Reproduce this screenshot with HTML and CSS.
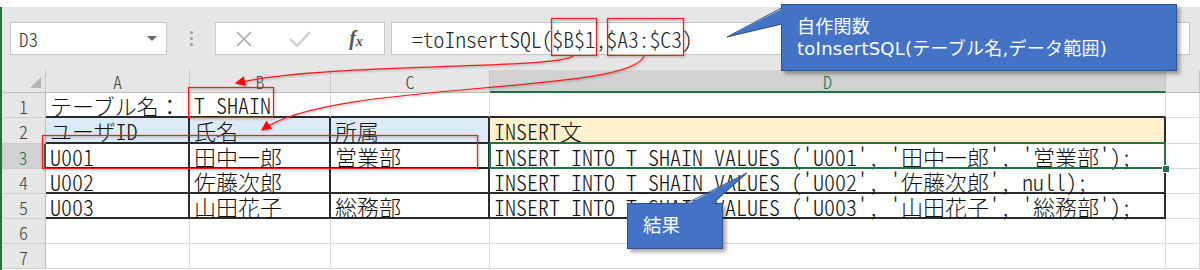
FILE: index.html
```html
<!DOCTYPE html>
<html lang="ja">
<head>
    <meta charset="UTF-8">
    <title>toInsertSQL</title>
    <link rel="stylesheet" href="styles.css">
</head>
<body>
    <div class="app">
        <div class="formula-bar">
            <div class="namebox"><span>D3</span><i class="caret"></i></div>
            <div class="grip"><i></i><i></i><i></i></div>
            <div class="fx-buttons">
                <span><svg width="18" height="16" viewBox="0 0 18 16"><path d="M2 1 L16 15 M16 1 L2 15" stroke="#a8a8a8" stroke-width="1.6" fill="none"/></svg></span>
                <span><svg width="22" height="16" viewBox="0 0 22 16"><path d="M1 8 L8 15 L21 1" stroke="#cfcfcf" stroke-width="2.4" fill="none"/></svg></span>
                <span class="fx">f<small>x</small></span>
            </div>
            <div class="formula">=toInsertSQL($B$1,$A3:$C3)</div>
        </div>

        <div class="sheet">
            <div class="hd corner"><i></i></div>
            <div class="hd">A</div>
            <div class="hd">B</div>
            <div class="hd">C</div>
            <div class="hd on">D</div>
            <div class="hd"></div>

            <div class="rh">1</div>
            <div class="c top"><span class="kana">テーブル名：</span></div>
            <div class="c top lift">T_SHAIN</div>
            <div class="c top"></div>
            <div class="c top"></div>
            <div class="c"></div>

            <div class="rh">2</div>
            <div class="c t head"><span class="kana">ユーザ</span>ID</div>
            <div class="c t head">氏名</div>
            <div class="c t head">所属</div>
            <div class="c t note">INSERT文</div>
            <div class="c"></div>

            <div class="rh on">3</div>
            <div class="c t">U001</div>
            <div class="c t">田中一郎</div>
            <div class="c t">営業部</div>
            <div class="c t active">INSERT INTO T_SHAIN VALUES ('U001', '田中一郎', '営業部');</div>
            <div class="c"></div>

            <div class="rh">4</div>
            <div class="c t">U002</div>
            <div class="c t">佐藤次郎</div>
            <div class="c t"></div>
            <div class="c t">INSERT INTO T_SHAIN VALUES ('U002', '佐藤次郎', null);</div>
            <div class="c"></div>

            <div class="rh">5</div>
            <div class="c t">U003</div>
            <div class="c t">山田花子</div>
            <div class="c t">総務部</div>
            <div class="c t">INSERT INTO T_SHAIN VALUES ('U003', '山田花子', '総務部');</div>
            <div class="c"></div>

            <div class="rh">6</div>
            <div class="c"></div><div class="c"></div><div class="c"></div><div class="c"></div><div class="c"></div>

            <div class="rh">7</div>
            <div class="c"></div><div class="c"></div><div class="c"></div><div class="c"></div><div class="c"></div>
        </div>
    </div>

    <!-- callouts -->
    <div class="callout callout-func">自作関数<br>toInsertSQL(テーブル名,データ範囲)</div>
    <div class="callout callout-result">結果</div>

    <!-- red marks, arrows and callout tails -->
    <svg class="marks" width="1200" height="270" viewBox="0 0 1200 270">
        <defs>
            <marker id="head" viewBox="0 0 10 10" refX="9" refY="5" markerWidth="11" markerHeight="10" markerUnits="userSpaceOnUse" orient="auto">
                <path d="M0 0 L10 5 L0 10 z" fill="#ff0000"/>
            </marker>
        </defs>
        <g class="red" fill="none" stroke="#ff1a1a" stroke-width="1.2">
            <rect x="551.5" y="18.5" width="45" height="37"/>
            <rect x="607.5" y="18.5" width="76" height="37"/>
            <rect x="188.5" y="87.5" width="85" height="30"/>
            <rect x="42.5" y="135.5" width="435" height="33"/>
            <path d="M573 56 C555 70 330 62 236 83" marker-end="url(#head)"/>
            <path d="M644 56 C630 95 330 80 262 130" marker-end="url(#head)"/>
        </g>
        <g class="tail">
            <polygon points="727,37 784,8 784,24" fill="#4472c4"/>
            <polyline points="781.5,8 727,37 781.5,24" fill="none" stroke="#2f528f" stroke-width="1"/>
            <polygon points="747,173 686,205 712,205" fill="#4472c4"/>
            <polyline points="686,203.5 747,173 712,203.5" fill="none" stroke="#2f528f" stroke-width="1"/>
        </g>
    </svg>
</body>
</html>
```

FILE: styles.css
```css
body {
    margin: 0;
    width: 1200px;
    height: 270px;
    overflow: hidden;
    position: relative;
    background: #fff;
    font-family: "Noto Sans CJK JP", sans-serif;
}
.app {
    margin-top: 7px;
    border-left: 2px solid #217346;
    height: 263px;
}

/* formula bar */
.formula-bar {
    height: 63px;
    background: #e6e6e6;
    display: flex;
    align-items: center;
    padding-left: 8px;
}
.namebox {
    width: 157px;
    height: 33px;
    box-sizing: border-box;
    background: #fff;
    border: 1px solid #c8c8c8;
    display: flex;
    align-items: center;
    justify-content: space-between;
    padding: 0 9px 0 8px;
    font-size: 19px;
    font-weight: 300;
    font-feature-settings: "hwid" 1;
    color: #333;
}
.caret {
    width: 0;
    height: 0;
    border-left: 5px solid transparent;
    border-right: 5px solid transparent;
    border-top: 5px solid #666;
}
.grip {
    width: 48px;
    display: flex;
    flex-direction: column;
    align-items: center;
    gap: 3px;
}
.grip i {
    width: 3px;
    height: 3px;
    border-radius: 50%;
    background: #9a9a9a;
}
.fx-buttons {
    width: 170px;
    height: 33px;
    box-sizing: border-box;
    background: #fff;
    border: 1px solid #c8c8c8;
    display: flex;
}
.fx-buttons span {
    flex: 1;
    display: flex;
    align-items: center;
    justify-content: center;
}
.fx {
    font-family: "Liberation Serif", serif;
    font-style: italic;
    font-weight: bold;
    font-size: 20px;
    color: #555;
}
.fx small {
    font-size: 14px;
    margin-top: 6px;
}
.formula {
    flex: 1;
    height: 33px;
    box-sizing: border-box;
    margin: 0 10px 0 6px;
    background: #fff;
    border: 1px solid #c8c8c8;
    padding-left: 20px;
    font-size: 21.6px;
    font-weight: 300;
    line-height: 31px;
    font-feature-settings: "hwid" 1;
    color: #222;
    white-space: nowrap;
}

/* sheet */
.sheet {
    display: grid;
    grid-template-columns: 44px 144px 141px 159px 676px 1fr;
    grid-template-rows: 23px 25px 26px 25px 25px 25px 25px 25px;
    font-feature-settings: "hwid" 1;
}
.sheet > div {
    box-sizing: border-box;
    white-space: nowrap;
}
.hd {
    background: #e6e6e6;
    border-right: 1px solid #c6c6c6;
    border-bottom: 1px solid #bdbdbd;
    text-align: center;
    font-size: 18px;
    font-weight: 300;
    line-height: 22px;
    color: #444;
}
.hd.on {
    background: #d2d2d2;
    color: #217346;
    border-bottom: 2px solid #217346;
}
.corner {
    position: relative;
}
.corner i {
    position: absolute;
    right: 4px;
    bottom: 4px;
    width: 0;
    height: 0;
    border-left: 11px solid transparent;
    border-bottom: 11px solid #b4b4b4;
}
.rh {
    background: #e6e6e6;
    border-right: 1px solid #bdbdbd;
    border-bottom: 1px solid #cfcfcf;
    text-align: center;
    font-size: 18px;
    font-weight: 300;
    line-height: 26px;
    color: #444;
}
.rh.on {
    background: #d2d2d2;
    color: #217346;
    border-right: 2px solid #217346;
}
.c {
    border-right: 1px solid #dadada;
    border-bottom: 1px solid #dadada;
    padding-left: 4px;
    font-size: 22px;
    font-weight: 300;
    line-height: 24px;
    color: #111;
}
.c.top {
    border-bottom: 2px solid #2b2b2b;
}
.c.lift {
    line-height: 22px;
}
.c.t {
    border-right: 2px solid #2b2b2b;
    border-bottom: 2px solid #2b2b2b;
}
.c.head {
    background: #ddebf7;
}
.c.note {
    background: #fff2cc;
}
.kana {
    font-feature-settings: normal;
}
.c.active {
    position: relative;
}
.c.active::after {
    content: "";
    position: absolute;
    left: -1px;
    right: -2px;
    top: -2px;
    bottom: -2px;
    border: 2px solid #217346;
}
.c.active::before {
    content: "";
    position: absolute;
    right: -6px;
    bottom: -6px;
    width: 6px;
    height: 6px;
    background: #217346;
    border: 1px solid #fff;
    z-index: 1;
}

/* callouts */
.callout {
    position: absolute;
    box-sizing: border-box;
    background: #4472c4;
    border: 1px solid #2f528f;
    box-shadow: 3px 3px 4px rgba(0, 0, 0, 0.35);
    color: #fff;
    font-family: "DejaVu Sans", "Noto Sans CJK JP", sans-serif;
    white-space: nowrap;
}
.callout-func {
    left: 781px;
    top: 4px;
    width: 396px;
    height: 67px;
    padding: 11px 0 0 15px;
    font-size: 18px;
    letter-spacing: 0.25px;
    line-height: 22px;
}
.callout-result {
    left: 627px;
    top: 203px;
    width: 96px;
    height: 46px;
    padding: 8px 0 0 15px;
    font-family: "Noto Sans CJK JP", sans-serif;
    font-size: 18.5px;
    line-height: 24px;
}
.marks {
    position: absolute;
    left: 0;
    top: 0;
    pointer-events: none;
}
.marks .red {
    filter: drop-shadow(1px 1px 1px rgba(0, 0, 0, 0.3));
}
```
